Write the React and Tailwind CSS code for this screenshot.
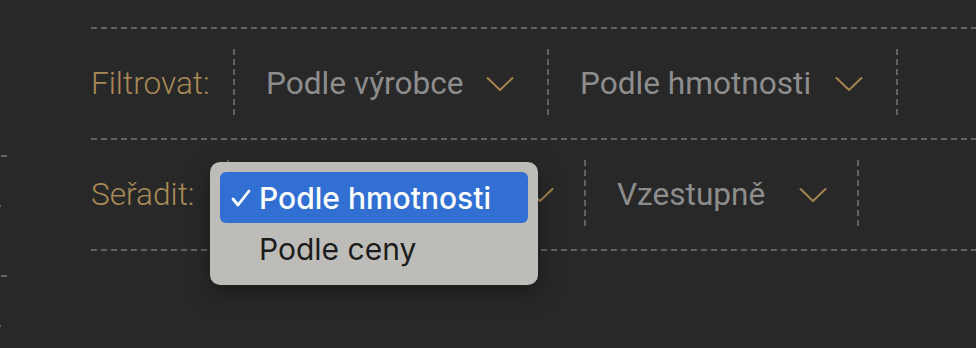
import React from 'react';

const dashX = 'h-[2px] bg-[linear-gradient(to_right,#626262_6px,transparent_6px)] bg-[length:10px_2px]';
const dashY = 'w-[2px] h-[70px] shrink-0 bg-[linear-gradient(to_bottom,#626262_6px,transparent_6px)] bg-[length:2px_10px]';

function Chevron() {
  return (
    <svg width="28" height="16" viewBox="0 0 28 16" fill="none" className="shrink-0">
      <path d="M1.5 2 L14 14 L26.5 2" stroke="#a3844f" strokeWidth="2" strokeLinejoin="round" strokeLinecap="round" />
    </svg>
  );
}

function Select({ label, width, right }) {
  return (
    <div className={`flex items-center justify-between pl-[31px] ${width} ${right}`}>
      <span className="text-[31.6px] leading-none text-[#8d8d8d] whitespace-nowrap">{label}</span>
      <Chevron />
    </div>
  );
}

function Row({ label, labelWidth, children }) {
  return (
    <div className="flex h-[109px] items-center">
      <div className={`${labelWidth} shrink-0 text-[31.6px] font-light leading-none text-[#a88a56]`}>{label}</div>
      <div className={dashY} />
      {children}
    </div>
  );
}

function App() {
  return (
    <div className="relative flex h-[348px] w-[976px] overflow-hidden bg-[#282828] font-['Roboto',sans-serif]">
      <div className="flex w-[91px] shrink-0 flex-col">
        <div className="mt-[155px] ml-px h-[2px] w-[6px] bg-[#626262]" />
        <div className="mt-[48px] h-[2px] w-px bg-[#626262]" />
        <div className="mt-[68px] ml-px h-[2px] w-[6px] bg-[#626262]" />
        <div className="mt-[48px] h-[2px] w-px bg-[#626262]" />
      </div>

      <div className="flex-1 pt-[27px]">
        <div className={dashX} />
        <Row label="Filtrovat:" labelWidth="w-[142px]">
          <Select label="Podle výrobce" width="w-[312px]" right="pr-[33px]" />
          <div className={dashY} />
          <Select label="Podle hmotnosti" width="w-[347px]" right="pr-[33px]" />
          <div className={dashY} />
        </Row>
        <div className={dashX} />
        <Row label="Seřadit:" labelWidth="w-[136px]">
          <Select label="Podle hmotnosti" width="w-[355px]" right="pr-[30px]" />
          <div className={dashY} />
          <Select label="Vzestupně" width="w-[271px]" right="pr-[30px]" />
          <div className={dashY} />
        </Row>
        <div className={dashX} />
      </div>

      <div className="absolute left-[210px] top-[162px] w-[328px] rounded-[10px] bg-[#bebcb8] p-[10px] shadow-[0_8px_24px_rgba(0,0,0,0.35)] font-['Inter',sans-serif]">
        <div className="flex h-[51px] items-center rounded-[6px] bg-[#316fd3] pl-[11px]">
          <svg width="20" height="18" viewBox="0 0 20 18" fill="none" className="shrink-0">
            <path d="M2 10 L7 16 L18 2" stroke="#ffffff" strokeWidth="2.8" strokeLinecap="round" strokeLinejoin="round" />
          </svg>
          <span className="ml-[8px] text-[30px] font-medium leading-none text-white">Podle hmotnosti</span>
        </div>
        <div className="flex h-[52px] items-center pl-[39px]">
          <span className="text-[30px] leading-none text-[#1c1c1c]">Podle ceny</span>
        </div>
      </div>
    </div>
  );
}

export default App;
